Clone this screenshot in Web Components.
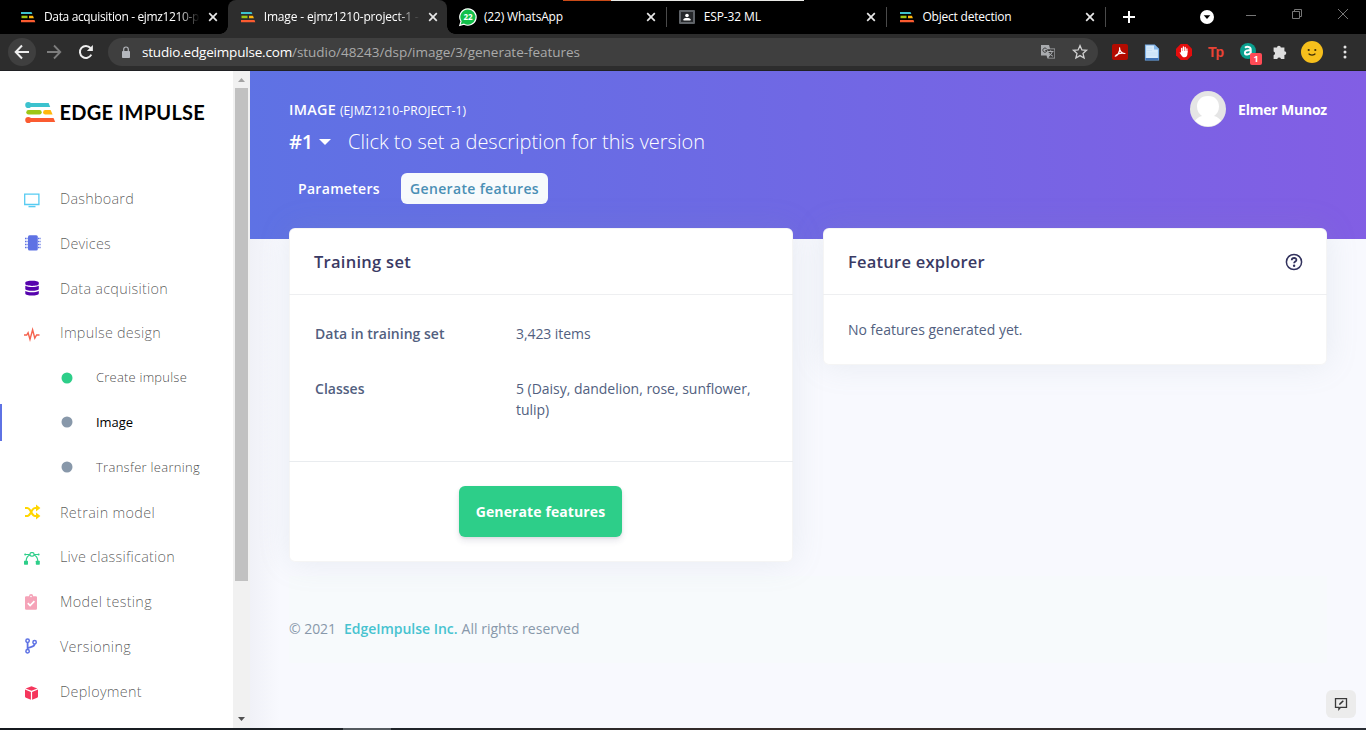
<!DOCTYPE html>
<html lang="en">
<head>
<meta charset="utf-8">
<title>Image - ejmz1210-project-1</title>
<style>
html,body{margin:0;height:100%;overflow:hidden;background:#f8f9fe}
body{font-family:"Open Sans","Noto Sans",sans-serif;font-size:14px}
</style>
</head>
<body>
<browser-window></browser-window>
<script>
const define = (name, html, setup) => customElements.define(name, class extends HTMLElement {
  connectedCallback() {
    if (this.shadowRoot) return;
    const t = document.createElement('template');
    t.innerHTML = typeof html === 'function' ? html(this) : html;
    this.attachShadow({mode: 'open'}).appendChild(t.content.cloneNode(true));
    if (setup) setup(this);
  }
});

/* Icons, keyed by name: [viewBox width, viewBox height, markup] */
const ICONS = {
  favicon: [16,12,'<path d="M1 .9h10.5l.9 2.200H1z" fill="#3cc2ce"/><path d="M1.500 4.700h6v2.500h-6z" fill="#9dc714"/><path d="M9 4.700h4l.9 2.500H9z" fill="#ffb80c"/><path d="M1 8.900h13.500l.8 2.300H1z" fill="#fb5b30"/>'],
  close: [10,10,'<path d="M1.200 1.200l7.600 7.600M8.800 1.200L1.200 8.800" stroke="#e8e8e8" stroke-width="1.700"/>'],
  plus: [14,14,'<path d="M7 1v12M1 7h12" stroke="#fff" stroke-width="2"/>'],
  whatsapp: [18,18,'<path d="M9 .8a8.200 8.200 0 1 1-4 15.400L.8 17.300 2 13.300A8.200 8.200 0 0 1 9 .8z" fill="#12c04a" stroke="#fff" stroke-width="1.200"/><text x="9" y="12" text-anchor="middle" font-family="Open Sans,sans-serif" font-size="8" font-weight="700" fill="#fff">22</text>'],
  classroom: [16,14,'<rect width="16" height="14" rx="1" fill="#5f6368"/><rect x="2" y="2" width="12" height="10" fill="#26282b"/><circle cx="8" cy="5.500" r="1.800" fill="#fff"/><path d="M4.500 10.500V9.200C4.800 7.600 11.200 7.600 11.500 9.200v1.300z" fill="#fff"/>'],
  dropdown: [14,14,'<circle cx="7" cy="7" r="7" fill="#fff"/><path d="M3.700 5.300h6.600L7 9z" fill="#000"/>'],
  min: [12,12,'<path d="M1 6.500h10" stroke="#777"/>'],
  restore: [12,12,'<path d="M1.500 3.500h7v7h-7zM3.500 3.500v-2h7v7h-2" fill="none" stroke="#777"/>'],
  winclose: [12,12,'<path d="M1 1l10 10M11 1L1 11" stroke="#777"/>'],
  back: [16,16,'<path d="M15 8H2M8 1.500L1.700 8 8 14.500" fill="none" stroke="#eee" stroke-width="2"/>'],
  fwd: [16,16,'<path d="M1 8h13M8 1.500L14.300 8 8 14.500" fill="none" stroke="#7d7d7d" stroke-width="1.800"/>'],
  reload: [16,16,'<path d="M13.300 10.600A6 6 0 1 1 12.500 4" fill="none" stroke="#eee" stroke-width="2"/><path d="M14.900 1v6H8.900z" fill="#eee"/>'],
  lock: [10,13,'<rect x="1" y="5" width="8" height="7" rx=".8" fill="#b4b7bc"/><path d="M2.700 5.500V3.300a2.300 2.300 0 0 1 4.600 0v2.200" fill="none" stroke="#b4b7bc" stroke-width="1.200"/>'],
  translate: [16,16,'<path d="M1 1h8l1 3.500h5v10H7.500L6.500 11.500H1z" fill="#a9abae"/><path d="M7 5.200h7.400v8.600H8.500L10 11z" fill="#3c3c3c"/><path d="M8 7.500h5.500M10.700 6.300v1.200M12.300 7.500c-.5 2.300-2 3.700-3.500 4.500M9.300 9c1 1.500 2 2.500 3.700 3.300" fill="none" stroke="#a9abae"/><path d="M6.700 5A2.100 2.100 0 1 0 7 6.600H5.200" fill="none" stroke="#3c3c3c"/>'],
  star: [16,16,'<path d="M8 1.600l1.900 4.300 4.600.4-3.500 3.100 1.100 4.600L8 11.600 3.900 14 5 9.400 1.500 6.300l4.600-.4z" fill="none" stroke="#d0d0d0" stroke-width="1.300"/>'],
  pdf: [16,16,'<rect width="16" height="16" rx="2" fill="#b30b00"/><path d="M3.300 12.200C5 12 8.600 7.500 7.600 3.800M7.600 3.800C7.300 6 9.500 9.600 12.900 9.500M4 11.300C6 9.800 10 8.800 12.900 9.500" fill="none" stroke="#fff" stroke-width="1.200" stroke-linecap="round"/>'],
  doc: [16,17,'<path d="M1.500 1h9L14.500 5V16h-13z" fill="#d5e9fb" stroke="#7bb0e8" stroke-width="1.200"/><path d="M10 1v4.500h4.500z" fill="#84b7ea"/><path d="M3 4h5M3 6.500h5M3 9h10M3 11h10" stroke="#c6e0f9"/><path d="M1.500 14h13v2.200h-13z" fill="#3f73b8"/>'],
  adblock: [16,16,'<path d="M4.700 0h6.600L16 4.700v6.600L11.300 16H4.700L0 11.300V4.700z" fill="#e40d0d"/><path d="M5.700 8V4.300M7.400 7.500V3M9.200 7.500V3.400M10.900 8V4.800" stroke="#fff" stroke-width="1.300" stroke-linecap="round"/><path d="M5 7h6.500v2.200c0 2.400-1 4-3 4-1.600 0-2.400-.8-3-1.800L3.600 8.700c.3-.7 1-.6 1.400 0z" fill="#fff"/>'],
  alpha: [18,18,'<circle cx="8" cy="8" r="8" fill="#0aa08f"/><path d="M5 4.800c2-1.700 5.700-1 5.700 1.700v5.300M10.700 7.500C7.500 7 4.700 7.700 4.900 9.800c.2 2.300 4.400 2.300 5.800-.2" fill="none" stroke="#fff" stroke-width="2"/>'],
  puzzle: [16,16,'<path d="M5 3.600a1.900 1.900 0 0 1 3.800 0H12.400v3.600a1.900 1.900 0 1 1 0 3.800V15H9a1.900 1.900 0 0 0-3.700 0H1.600v-3.800a1.900 1.900 0 0 0 0-3.700V3.600z" fill="#dedede"/>'],
  smile: [22,22,'<circle cx="11" cy="11" r="11" fill="#f6bf1c"/><circle cx="7.700" cy="9" r="1.100" fill="#3b2c08"/><circle cx="14.300" cy="9" r="1.100" fill="#3b2c08"/><path d="M7.600 12.600c1.300 1.900 5.500 1.900 6.800 0" fill="none" stroke="#3b2c08" stroke-width="1.200"/>'],
  dots: [4,14,'<circle cx="2" cy="2" r="1.500" fill="#e4e4e4"/><circle cx="2" cy="7" r="1.500" fill="#e4e4e4"/><circle cx="2" cy="12" r="1.500" fill="#e4e4e4"/>'],
  logo: [31,23,'<circle cx="3.300" cy="4" r="3.100" fill="#3cc2ce"/><path d="M3 2.100h20.600l1.600 4H3z" fill="#3cc2ce"/><rect x="1.300" y="9" width="15.400" height="4.400" rx="2.200" fill="#9dc714"/><path d="M20.300 9h5.300l2 4.400h-7.300a2.200 2.200 0 0 1 0-4.400z" fill="#ffb80c"/><circle cx="3.300" cy="19" r="3.100" fill="#fb5b30"/><path d="M3 16.900h25.500l1.700 4.100H3z" fill="#fb5b30"/>'],
  tv: [16,16,'<path d="M.7 2.200h14.200v10.300H.7z" fill="none" stroke="#56cbf2" stroke-width="1.300"/><path d="M4.500 14.600h7" stroke="#56cbf2" stroke-width="1.400"/>'],
  chip: [16,16,'<rect x="4" y=".3" width="9.800" height="15.200" rx="1.500" fill="#5e72e4"/><path d="M1 3.500h2.600M1 6.500h2.600M1 9.500h2.600M1 12.500h2.600M14 3.500H16.600M14 6.500H16.600M14 9.500H16.600M14 12.500H16.600" stroke="#5e72e4" stroke-width="1.300" stroke-dasharray="1.200 .4"/>'],
  db: [16,16,'<g fill="#5603ad"><path d="M1.300 2.600C1.300.1 14.800.1 14.800 2.600V4c0 2.500-13.500 2.500-13.500 0z"/><path d="M1.300 5.800c3 1.700 10.500 1.700 13.500 0V9c0 2.400-13.500 2.400-13.500 0z"/><path d="M1.300 10.900c3 1.700 10.500 1.700 13.500 0v2.500c0 2.700-13.500 2.700-13.500 0z"/></g>'],
  pulse: [16,16,'<path d="M0 9h2.700l1.400-2.300L6 13.400 8.600 3.700l2.200 8.400L12.600 9H15.500" fill="none" stroke="#f5624d" stroke-width="1.400"/>'],
  shuffle: [16,16,'<path d="M1 4H3.300C6.800 4 7.500 12 11 12h2M1 12H3.300C6.800 12 7.500 4 11 4h2" fill="none" stroke="#ffd600" stroke-width="2.100"/><path d="M12 .5L16.400 4 12 7.500zM12 8.500L16.400 12 12 15.500z" fill="#ffd600"/>'],
  bezier: [16,16,'<g stroke="#2dce89" fill="none" stroke-width="1.200"><path d="M1.700 4.500h4.200M10 4.500h4.200M5.900 5C3.300 6 2.300 8 2.100 11M10 5c2.600 1 3.600 3 3.800 6"/><rect x="6" y="2.700" width="4" height="3.500" rx="1.400"/></g><g fill="#2dce89"><rect x="0" y="10.700" width="4" height="4" rx=".6"/><rect x="11.800" y="10.700" width="4" height="4" rx=".6"/><circle cx="1.200" cy="4.500" r="1"/><circle cx="14.600" cy="4.500" r="1"/></g>'],
  clip: [16,16,'<path d="M2.200 2.200H5a2 2 0 0 1 4.200 0h2.700A1.200 1.200 0 0 1 13 3.300V14.500a1.200 1.200 0 0 1-1.200 1.200H2.200A1.200 1.200 0 0 1 1 14.500V3.300a1.200 1.200 0 0 1 1.200-1.100z" fill="#f5a3b8"/><circle cx="7" cy="2.500" r=".8" fill="#fff"/><path d="M3.800 9.200l2.300 2.300 4.300-4.300" fill="none" stroke="#fff" stroke-width="1.700"/>'],
  branch: [16,16,'<g fill="none" stroke="#5e72e4" stroke-width="1.500"><circle cx="3.600" cy="2.800" r="1.700"/><circle cx="3.600" cy="13.200" r="1.700"/><circle cx="10.600" cy="4.300" r="1.700"/><path d="M3.600 4.500v7M10.600 6c0 3.500-5 2.500-7 4.300" stroke-width="1.800"/></g>'],
  cube: [16,16,'<g fill="#f5365c"><path d="M7.500 1.200l5.900 2.200-5.900 2.400-5.900-2.400z"/><path d="M1 4.600l5.900 2.400v7.700L1.900 12.700A1.400 1.400 0 0 1 1 11.500zM14 4.600L8.100 7v7.700l5-2a1.400 1.400 0 0 0 .9-1.200z"/></g>'],
  dotgreen: [12,12,'<circle cx="6" cy="6" r="5.500" fill="#2dce89"/>'],
  dotgray: [12,12,'<circle cx="6" cy="6" r="5.500" fill="#8898aa"/>'],
  caret: [12,6,'<path d="M0 0h12L6 6z" fill="#fff"/>'],
  avatar: [36,36,'<circle cx="18" cy="18" r="18" fill="#e5e5e5"/><path d="M18 5C10.500 5 7 10 7 15.500c0 4.500 2 7.500 5 9.500-3.500 1-5.500 2.500-7 4.800a18 18 0 0 0 26 0c-1.500-2.300-3.500-3.800-7-4.800 3-2 5-5 5-9.500C29 10 25.500 5 18 5z" fill="#fff"/>'],
  help: [18,18,'<circle cx="9" cy="9" r="7.600" fill="none" stroke="#32325d" stroke-width="1.500"/><path d="M6.700 7.200C6.900 4.200 11.500 4.400 11.400 7c0 1.600-2.300 1.600-2.300 3.300" fill="none" stroke="#32325d" stroke-width="1.800"/><circle cx="9.100" cy="12.700" r="1.200" fill="#32325d"/>'],
  feedback: [14,14,'<path d="M1.500 1.700h11v8.600H6.500L4.900 12.200V10.300H1.500z" fill="none" stroke="#3a3a3a" stroke-width="1.300"/><path d="M5 8l.5-1.800 3.300-3 1 1L6.600 7.500z" fill="#333"/>'],
  up: [7,4,'<path d="M0 4h7L3.500 0z" fill="#a3a3a3"/>'],
  down: [7,4,'<path d="M0 0h7L3.500 4z" fill="#505050"/>']
};
const icon = (n, w, attrs = '') => `<ui-icon name="${n}" w="${w}" ${attrs}></ui-icon>`;

define('browser-window', `<style>
:host{display:grid;grid-template-rows:34px 37px 657px 2px;height:730px;width:1366px;overflow:hidden;position:relative}
.mid{display:grid;grid-template-columns:233px 17px 1fr;min-height:0}
.base{display:flex;background:linear-gradient(90deg,#15191e,#20252a 30%,#3a2e2a 60%,#292c33)}
.base i{margin-left:343px;width:48px;background:#555b60}
.top{position:absolute;top:0;left:563px;display:flex;height:1px}
.top i{width:48px;background:#c94a17}.top b{width:193px;background:#e9e9e6}
</style>
<tab-strip></tab-strip><nav-toolbar></nav-toolbar>
<div class="mid"><side-bar></side-bar><scroll-track></scroll-track><studio-page></studio-page></div>
<div class="base"><i></i></div><div class="top"><i></i><b></b></div>`);

define('tab-strip', `<style>
:host{display:flex;background:#000;padding-left:8px;align-items:stretch;overflow:hidden}
.r{display:flex;align-items:center;flex:1}
.r ui-icon{flex:none}
</style>
<browser-tab icon="favicon" w="155" fade>Data acquisition - ejmz1210-p</browser-tab>
<browser-tab icon="favicon" w="155" fade active>Image - ejmz1210-project-1 -</browser-tab>
<browser-tab icon="whatsapp" w="79" sep>(22) WhatsApp</browser-tab>
<browser-tab icon="classroom" w="57" sep>ESP-32 ML</browser-tab>
<browser-tab icon="favicon" w="89" sep>Object detection</browser-tab>
<div class="r">${icon('plus',14,'style="margin-left:16px"')}${icon('dropdown',14,'style="margin-left:64px"')}${icon('min',12,'style="margin:-5px 0 0 31px"')}${icon('restore',12,'style="margin:-6px 0 0 34px"')}${icon('winclose',12,'style="margin:-6px 0 0 34px"')}</div>`);

define('browser-tab', el => `<style>
:host{display:flex;align-items:center;width:219.700px;flex:none;box-sizing:border-box;padding-left:12px;color:#fff;font-size:12px;position:relative}
:host([active]){background:#2d2d2d;border-radius:8px 8px 0 0}
:host([active])::before,:host([active])::after{content:"";position:absolute;bottom:0;width:8px;height:8px;background:radial-gradient(circle at 0 0,transparent 7.500px,#2d2d2d 8px);left:-8px}
:host([active])::after{left:auto;right:-8px;background:radial-gradient(circle at 100% 0,transparent 7.500px,#2d2d2d 8px)}
.i{width:24px;display:flex}
.t{width:164px;line-height:16px}
:host([icon=whatsapp]) .i,:host([icon=classroom]) .i{width:25px}
:host([icon=whatsapp]) .t{width:165px}
:host([icon=classroom]) .t{width:164px}
:host([icon=favicon][sep]) .t{width:165px}
:host([fade]) .t{-webkit-mask:linear-gradient(90deg,#000 134px,transparent 156px)}
s{margin-left:10px;width:1px;height:20px;background:#4a4a4a}
</style><span class="i">${icon(el.getAttribute('icon'), {favicon:16,whatsapp:18,classroom:16}[el.getAttribute('icon')])}</span>
<span class="t"><fit-text w="${el.getAttribute('w')}">${el.textContent}</fit-text></span>${icon('close',10)}${el.hasAttribute('sep')?'<s></s>':''}`);

define('nav-toolbar', `<style>
:host{display:flex;align-items:center;background:#2d2d2d;border-bottom:1px solid #202124;box-sizing:border-box;padding-left:8px}
ui-icon{flex:none}
.b{width:28px;height:28px;border-radius:50%;background:#3f3f3f;display:grid;place-items:center}
.a{margin-left:14px;width:990px;height:28px;border-radius:14px;background:#3f3f3f;display:flex;align-items:center;padding:0 10px 0 13px;box-sizing:border-box;font-size:13.500px;color:#fff}
.p{color:#aaa}
.a fit-text{line-height:20px}
.x{display:flex;align-items:center;flex:1;padding-left:14px}
.tp{font:700 14px "Liberation Sans",sans-serif;color:#ea4335;width:16px;margin-left:16px;letter-spacing:-1px}
.al{position:relative;display:flex;margin-left:16px}
.bd{position:absolute;left:10px;top:10px;width:12px;height:12px;border-radius:2px;background:#ff4b55;color:#fff;font:700 9px/12px "Open Sans",sans-serif;text-align:center}
</style>
<span class="b">${icon('back',16)}</span>${icon('fwd',16,'style="margin-left:10px"')}${icon('reload',16,'style="margin-left:16px"')}
<div class="a">${icon('lock',10)}<fit-text w="150" style="margin-left:11px">studio.edgeimpulse.com</fit-text><fit-text class="p" w="288">/studio/48243/dsp/image/3/generate-features</fit-text>
${icon('translate',16,'style="margin-left:auto"')}${icon('star',16,'style="margin-left:16px"')}</div>
<div class="x">${icon('pdf',16)}${icon('doc',16,'style="margin-left:16px"')}${icon('adblock',16,'style="margin-left:16px"')}<span class="tp">Tp</span><span class="al">${icon('alpha',18)}<span class="bd">1</span></span>${icon('puzzle',16,'style="margin-left:14px"')}${icon('smile',22,'style="margin-left:13px"')}${icon('dots',4,'style="margin-left:20px"')}</div>`);

define('side-bar', `<style>
:host{display:block;background:#fff;overflow:hidden}
.l{display:flex;align-items:center;padding:30px 0 0 24.500px;height:23px;font:700 20px/23px Lato,sans-serif;color:#000}
.l fit-text{margin-left:4px}
nav{padding-top:52.500px;display:grid;grid-auto-rows:44.800px}
</style>
<div class="l">${icon('logo',31)}<fit-text w="145.500">EDGE IMPULSE</fit-text></div>
<nav>
<side-item icon="tv" w="74">Dashboard</side-item>
<side-item icon="chip" w="51" dy="-2">Devices</side-item>
<side-item icon="db" w="108" dy="-1.500" ty="1">Data acquisition</side-item>
<side-item icon="pulse" w="101">Impulse design</side-item>
<side-item icon="dotgreen" w="91" ty="-1" sub>Create impulse</side-item>
<side-item icon="dotgray" w="37" ty="-1" sub active>Image</side-item>
<side-item icon="dotgray" w="104" ty="-1" sub>Transfer learning</side-item>
<side-item icon="shuffle" w="95" dy="-1.500" ty="1">Retrain model</side-item>
<side-item icon="bezier" w="115">Live classification</side-item>
<side-item icon="clip" w="92" dy="-1">Model testing</side-item>
<side-item icon="branch" w="71" dy="-1.500">Versioning</side-item>
<side-item icon="cube" w="82">Deployment</side-item>
</nav>`);

define('side-item', el => `<style>
:host{display:flex;align-items:center;padding-left:24px;color:rgba(0,0,0,.66);font-size:14.400px;font-weight:300;line-height:20px}
:host([sub]){padding-left:61px;font-size:13px;color:rgba(0,0,0,.74)}
:host([active]){color:#000;font-weight:400;background:linear-gradient(#5e72e4,#5e72e4) 0 4px/2px 37px no-repeat}
.i{width:36px;display:flex;position:relative}:host([sub]) .i{width:35px}
fit-text{position:relative;top:${+el.getAttribute('ty')||0}px}
</style><span class="i" style="top:${el.hasAttribute('sub')?-.5:1+(+el.getAttribute('dy')||0)}px">${icon(el.getAttribute('icon'), el.hasAttribute('sub')?12:16)}</span><fit-text w="${el.getAttribute('w')}">${el.textContent}</fit-text>`);

define('scroll-track', `<style>
:host{display:flex;flex-direction:column;align-items:center;background:#f1f1f1;position:relative;z-index:1}
.t{width:13px;height:493px;background:#c1c1c1;margin:6px 1px 0 0}
</style>${icon('up',7,'style="margin-top:7px"')}<div class="t"></div>${icon('down',7,'style="margin:auto 0 7px"')}`);

define('studio-page', `<style>
:host{display:block;padding:0 39px;background:linear-gradient(87deg,#5e72e4,#825ee4) 0 0/100% 168px no-repeat,linear-gradient(90deg,#f0f1f7,#f8f9fe 30px);color:#525f7f;position:relative;overflow:hidden}
.hd{display:flex;justify-content:space-between;height:102px;color:#fff}
.ti{display:flex;flex-direction:column;padding-top:28px}
.k{font-weight:600;font-size:14.400px;line-height:22px;display:flex;align-items:baseline;gap:4px}
.k .s{font-size:12px;font-weight:500}
.v{display:flex;align-items:center;font-size:20px;line-height:30px;margin-top:5px}
.u{display:flex;align-items:center;height:36px;padding-top:20px;font-weight:700;gap:12px;font-size:14px}
.tabs{display:flex;height:31px;gap:12px;font-weight:600;line-height:31px}
.tabs span{padding:0 9px;color:#fff;display:block;height:31px}
.tabs .on{background:#f7fafc;color:#4a8fb5;border-radius:6px}
.g{display:grid;grid-template-columns:1fr 1fr;gap:30px;align-items:start;margin-top:24px;height:333px;position:relative;z-index:1}
dl{margin:0;padding:28px 25px 41px 26px;display:grid;grid-template-columns:201px 1fr;row-gap:34px;line-height:21px}
dt{font-weight:600}dd{margin:0}
.f{border-top:1px solid #e9ecef;padding:24px 1px 24px 0;display:flex;justify-content:center}
.bt{width:163px;height:51px;box-sizing:border-box;border-radius:6px;background:#2dce89;color:#fff;font-weight:700;display:flex;align-items:center;justify-content:center;box-shadow:0 4px 6px rgba(50,50,93,.11),0 1px 3px rgba(0,0,0,.08)}
.n{padding:24px 25px;line-height:21px}
footer{margin-top:15px;background:#f7fafc;display:flex;align-items:center;color:#8898aa;padding-top:19px;height:68px;line-height:20px}
footer b{color:#47c3d0;font-weight:600}
.fb{position:absolute;right:10px;bottom:10px;width:30px;height:28px;border-radius:6px;background:#ececec;display:grid;place-items:center}
</style>
<div class="hd"><div class="ti">
<div class="k"><fit-text w="47">IMAGE</fit-text><fit-text class="s" w="126">(EJMZ1210-PROJECT-1)</fit-text></div>
<div class="v"><fit-text w="24" style="font-weight:600">#1</fit-text>${icon('caret',12,'style="margin:0 17px 0 6px"')}<fit-text w="357" style="font-weight:300">Click to set a description for this version</fit-text></div></div>
<div class="u">${icon('avatar',36)}<fit-text w="89">Elmer Munoz</fit-text></div></div>
<div class="tabs"><span><fit-text w="82">Parameters</fit-text></span><span class="on"><fit-text w="129">Generate features</fit-text></span></div>
<div class="g">
<info-card><fit-text slot="title" w="97">Training set</fit-text>
<dl><dt><fit-text w="129.500">Data in training set</fit-text></dt><dd><fit-text w="74.500">3,423 items</fit-text></dd>
<dt><fit-text w="49.500">Classes</fit-text></dt><dd><fit-text w="234.500">5 (Daisy, dandelion, rose, sunflower,</fit-text><br><fit-text w="33">tulip)</fit-text></dd></dl>
<div class="f"><div class="bt"><fit-text w="129.500">Generate features</fit-text></div></div></info-card>
<info-card><fit-text slot="title" w="137">Feature explorer</fit-text>${icon('help',18,'slot="action"')}
<div class="n"><fit-text w="174.500">No features generated yet.</fit-text></div></info-card>
</div>
<footer><fit-text w="47">© 2021</fit-text><b style="margin:0 4px 0 8px"><fit-text w="113.500">EdgeImpulse Inc.</fit-text></b><fit-text w="118">All rights reserved</fit-text></footer>
<div class="fb">${icon('feedback',14)}</div>`);

define('info-card', `<style>
:host{display:block;background:#fff;border-radius:6px;padding-bottom:1px;box-shadow:0 0 32px rgba(136,152,170,.15),inset 0 0 0 1px rgba(0,0,0,.04)}
header{display:flex;justify-content:space-between;align-items:center;height:66px;padding:0 24.500px 0 25px;border-bottom:1px solid #eeeff1;font-size:16.500px;font-weight:600;color:#3a3a64}
::slotted(ui-icon){position:relative;top:.5px}
</style><header><slot name="title"></slot><slot name="action"></slot></header><slot></slot>`);

define('ui-icon', el => {
  const [vw, vh, body] = ICONS[el.getAttribute('name')], w = +el.getAttribute('w');
  return `<style>:host{display:block;flex:none;line-height:0}svg{display:block;overflow:visible}</style><svg width="${w}" height="${w*vh/vw}" viewBox="0 0 ${vw} ${vh}">${body}</svg>`;
});

/* Spreads its text over the width in "w" by adjusting the tracking. */
define('fit-text', `<style>:host{display:inline-block;white-space:pre}</style><slot></slot>`, el => {
  const nat = el.getBoundingClientRect().width;
  el.style.letterSpacing = ((+el.getAttribute('w') - nat) / el.textContent.length) + 'px';
});
</script>
</body>
</html>
